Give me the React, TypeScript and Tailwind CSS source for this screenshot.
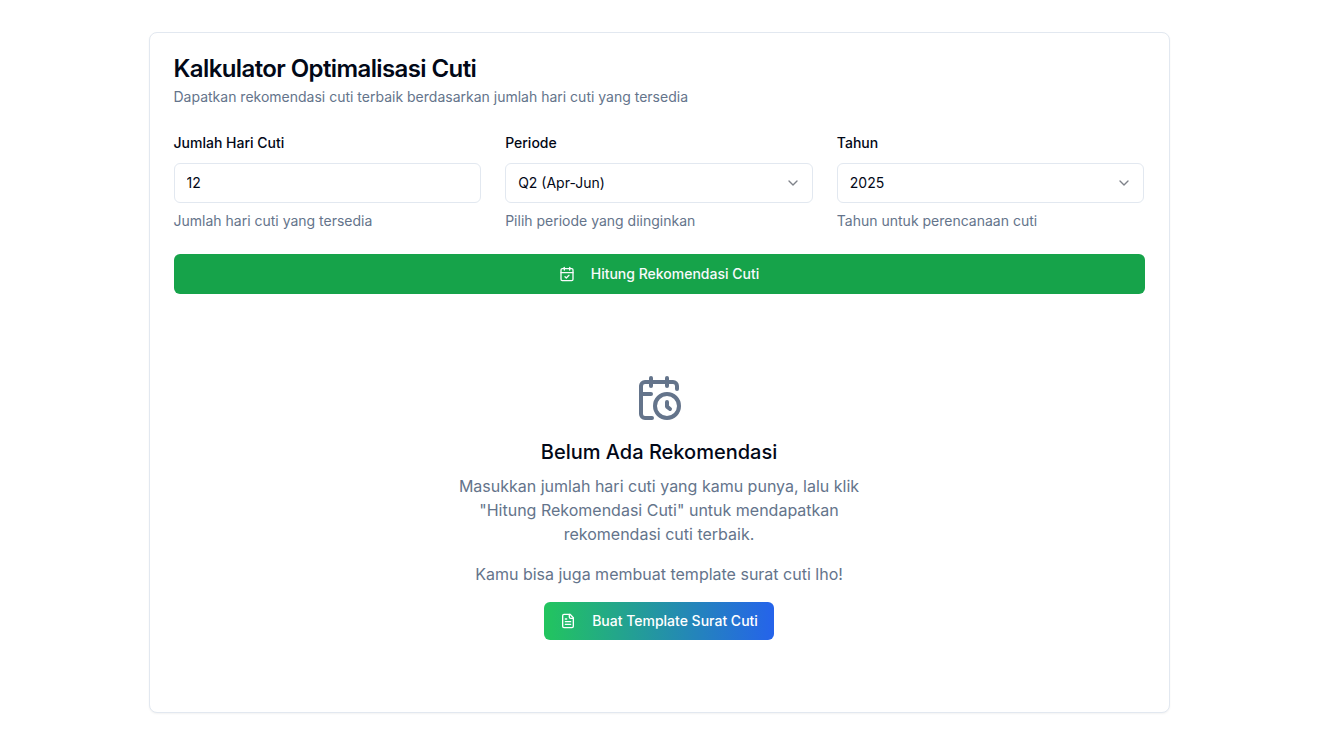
import { useState } from "react";
import type { ReactNode } from "react";
import { CalendarCheck, ChevronDown } from "lucide-react";

type IconProps = { className: string; children: ReactNode };

function Icon({ className, children }: IconProps) {
  return (
    <svg
      viewBox="0 0 24 24"
      fill="none"
      stroke="currentColor"
      strokeWidth="2"
      strokeLinecap="round"
      strokeLinejoin="round"
      aria-hidden="true"
      className={className}
    >
      {children}
    </svg>
  );
}

function CalendarClockIcon({ className }: { className: string }) {
  return (
    <Icon className={className}>
      <path d="M21 7.5V6a2 2 0 0 0-2-2H5a2 2 0 0 0-2 2v14a2 2 0 0 0 2 2h3.5" />
      <path d="M16 2v4" />
      <path d="M8 2v4" />
      <path d="M3 10h5" />
      <path d="M17.5 17.5 16 16.3V14" />
      <circle cx="16" cy="16" r="6" />
    </Icon>
  );
}

function FileTextIcon({ className }: { className: string }) {
  return (
    <Icon className={className}>
      <path d="M15 2H6a2 2 0 0 0-2 2v16a2 2 0 0 0 2 2h12a2 2 0 0 0 2-2V7Z" />
      <path d="M14 2v4a2 2 0 0 0 2 2h4" />
      <path d="M10 9H8" />
      <path d="M16 13H8" />
      <path d="M16 17H8" />
    </Icon>
  );
}

type FieldProps = {
  id: string;
  label: string;
  hint: string;
  children: ReactNode;
};

function Field({ id, label, hint, children }: FieldProps) {
  return (
    <div className="flex flex-col gap-2">
      <label htmlFor={id} className="text-sm/6 font-medium">
        {label}
      </label>
      {children}
      <p id={`${id}-hint`} className="text-sm/5 text-[#64748b]">
        {hint}
      </p>
    </div>
  );
}

type SelectFieldProps = {
  id: string;
  label: string;
  hint: string;
  options: string[];
  initial: string;
};

function SelectField({ id, label, hint, options, initial }: SelectFieldProps) {
  const [value, setValue] = useState(initial);
  return (
    <Field id={id} label={label} hint={hint}>
      <div className="relative">
        <select
          id={id}
          aria-describedby={`${id}-hint`}
          value={value}
          onChange={(e) => setValue(e.target.value)}
          className="block h-10 w-full appearance-none rounded-md border border-[#e2e8f0] bg-white pr-9 pl-3 text-sm/5"
        >
          {options.map((option) => (
            <option key={option}>{option}</option>
          ))}
        </select>
        <ChevronDown className="pointer-events-none absolute top-3 right-3 size-4 opacity-50" />
      </div>
    </Field>
  );
}

export default function App() {
  const [days, setDays] = useState("12");

  return (
    <main className="bg-white px-4 py-8 font-['Inter',sans-serif] text-[#020817]">
      <section className="mx-auto max-w-[1021px] rounded-lg border border-[#e2e8f0] bg-white p-6 shadow-xs">
        <header className="mb-6 flex flex-col gap-1.5">
          <h1 className="text-2xl/6 font-semibold tracking-tight">Kalkulator Optimalisasi Cuti</h1>
          <p className="text-sm/5 text-[#64748b]">
            Dapatkan rekomendasi cuti terbaik berdasarkan jumlah hari cuti yang tersedia
          </p>
        </header>

        <form onSubmit={(e) => e.preventDefault()}>
          <div className="grid gap-6 md:grid-cols-3">
            <Field id="days" label="Jumlah Hari Cuti" hint="Jumlah hari cuti yang tersedia">
              <input
                id="days"
                type="text"
                inputMode="numeric"
                aria-describedby="days-hint"
                value={days}
                onChange={(e) => setDays(e.target.value)}
                className="h-10 w-full rounded-md border border-[#e2e8f0] bg-white px-3 pb-px text-sm/5"
              />
            </Field>
            <SelectField
              id="period"
              label="Periode"
              hint="Pilih periode yang diinginkan"
              options={["Q1 (Jan-Mar)", "Q2 (Apr-Jun)", "Q3 (Jul-Sep)", "Q4 (Okt-Des)"]}
              initial="Q2 (Apr-Jun)"
            />
            <SelectField
              id="year"
              label="Tahun"
              hint="Tahun untuk perencanaan cuti"
              options={["2024", "2025", "2026"]}
              initial="2025"
            />
          </div>
          <button
            type="submit"
            className="mt-[23px] flex h-10 w-full items-center justify-center gap-4 rounded-md bg-[#16a34a] px-4 text-sm font-medium text-[#f8fafc]"
          >
            <CalendarCheck className="size-4" />
            Hitung Rekomendasi Cuti
          </button>
        </form>

        <div className="mt-8 flex flex-col items-center py-12 text-center">
          <CalendarClockIcon className="mb-4 size-12 text-[#64748b]" />
          <h2 className="mb-2 text-xl/7 font-medium">Belum Ada Rekomendasi</h2>
          <p className="mb-4 max-w-md text-base/6 text-[#64748b]">
            Masukkan jumlah hari cuti yang kamu punya, lalu klik "Hitung Rekomendasi Cuti" untuk
            mendapatkan rekomendasi cuti terbaik.
          </p>
          <p className="mb-4 text-base/6 text-[#64748b]">
            Kamu bisa juga membuat template surat cuti lho!
          </p>
          <button
            type="button"
            className="flex h-[38px] items-center gap-4 rounded-md bg-linear-to-r/srgb from-[#22c55e] to-[#2563eb] px-4 text-sm font-medium text-white"
          >
            <FileTextIcon className="size-4" />
            Buat Template Surat Cuti
          </button>
        </div>
      </section>
    </main>
  );
}
